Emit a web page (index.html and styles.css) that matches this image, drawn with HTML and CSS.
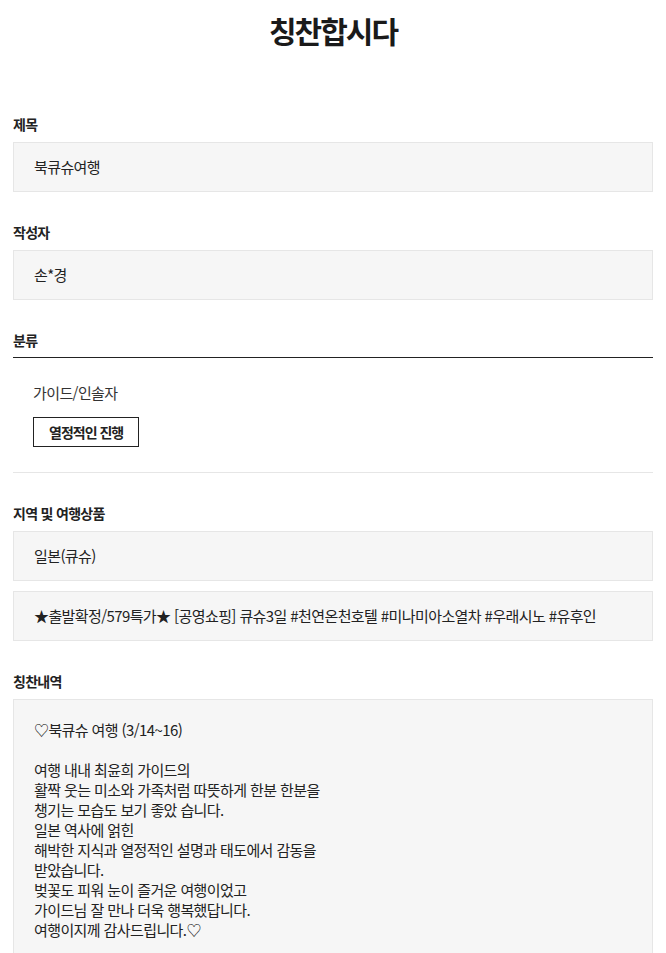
FILE: index.html
```html
<!DOCTYPE html>
<html lang="ko">
<head>
    <meta charset="UTF-8">
    <meta name="viewport" content="width=device-width, initial-scale=1.0">
    <title>칭찬합시다</title>
    <link rel="stylesheet" href="styles.css">
</head>
<body>
    <div class="page">
        <h1 class="page-title">칭찬합시다</h1>

        <div class="field">
            <h3 class="field-label">제목</h3>
            <div class="field-box">북큐슈여행</div>
        </div>

        <div class="field">
            <h3 class="field-label">작성자</h3>
            <div class="field-box">손*경</div>
        </div>

        <div class="field">
            <h3 class="field-label field-label-line">분류</h3>
            <div class="category">
                <p class="category-name">가이드/인솔자</p>
                <span class="tag">열정적인 진행</span>
            </div>
        </div>

        <div class="field">
            <h3 class="field-label">지역 및 여행상품</h3>
            <div class="field-box">일본(큐슈)</div>
            <div class="field-box">★출발확정/579특가★ [공영쇼핑] 큐슈3일 #천연온천호텔 #미나미아소열차 #우래시노 #유후인</div>
        </div>

        <div class="field">
            <h3 class="field-label">칭찬내역</h3>
            <div class="field-box content-box">
                <p>♡북큐슈 여행 (3/14~16)</p>
                <p><br></p>
                <p>여행 내내 최윤희 가이드의<br>
                활짝 웃는 미소와 가족처럼 따뜻하게 한분 한분을<br>
                챙기는 모습도 보기 좋았 습니다.<br>
                일본 역사에 얽힌<br>
                해박한 지식과 열정적인 설명과 태도에서 감동을<br>
                받았습니다.<br>
                벚꽃도 피워 눈이 즐거운 여행이었고<br>
                가이드님 잘 만나 더욱 행복했답니다.<br>
                여행이지께 감사드립니다.♡</p>
                <p><br></p>
            </div>
        </div>
    </div>
</body>
</html>
```

FILE: styles.css
```css
body {
    margin: 0;
    font-family: "Noto Sans CJK KR", "Noto Sans", sans-serif;
    color: #222;
    background: #fff;
}
.page {
    padding: 0 13px;
}
.page-title {
    margin: 0;
    padding-top: 10px;
    font-size: 30px;
    line-height: 40px;
    font-weight: 700;
    letter-spacing: -2px;
    text-align: center;
    color: #1a1a1a;
}
.field {
    margin-top: 30px;
}
.page-title + .field {
    margin-top: 64px;
}
.field-label {
    margin: 0 0 8px 0;
    font-size: 14px;
    line-height: 20px;
    font-weight: 700;
    letter-spacing: -0.7px;
    color: #222;
}
.field-label-line {
    margin: 0;
    padding-bottom: 7px;
    border-bottom: 1px solid #222;
}
.field-box {
    padding: 14px 20px;
    background: #f6f6f6;
    border: 1px solid #e6e6e6;
    font-size: 15px;
    line-height: 20px;
    letter-spacing: -0.6px;
    color: #222;
}
.field-box + .field-box {
    margin-top: 10px;
}
.content-box {
    padding-top: 20px;
}
.content-box p {
    margin: 0;
}
.category {
    padding: 25px 20px 25px;
    border-bottom: 1px solid #e6e6e6;
}
.category-name {
    margin: 0 0 14px 0;
    font-size: 15px;
    line-height: 20px;
    letter-spacing: -0.6px;
    color: #333;
}
.tag {
    display: inline-block;
    height: 28px;
    padding: 0 15px;
    border: 1px solid #222;
    font-size: 14px;
    line-height: 28px;
    font-weight: 700;
    letter-spacing: -1px;
}
```
